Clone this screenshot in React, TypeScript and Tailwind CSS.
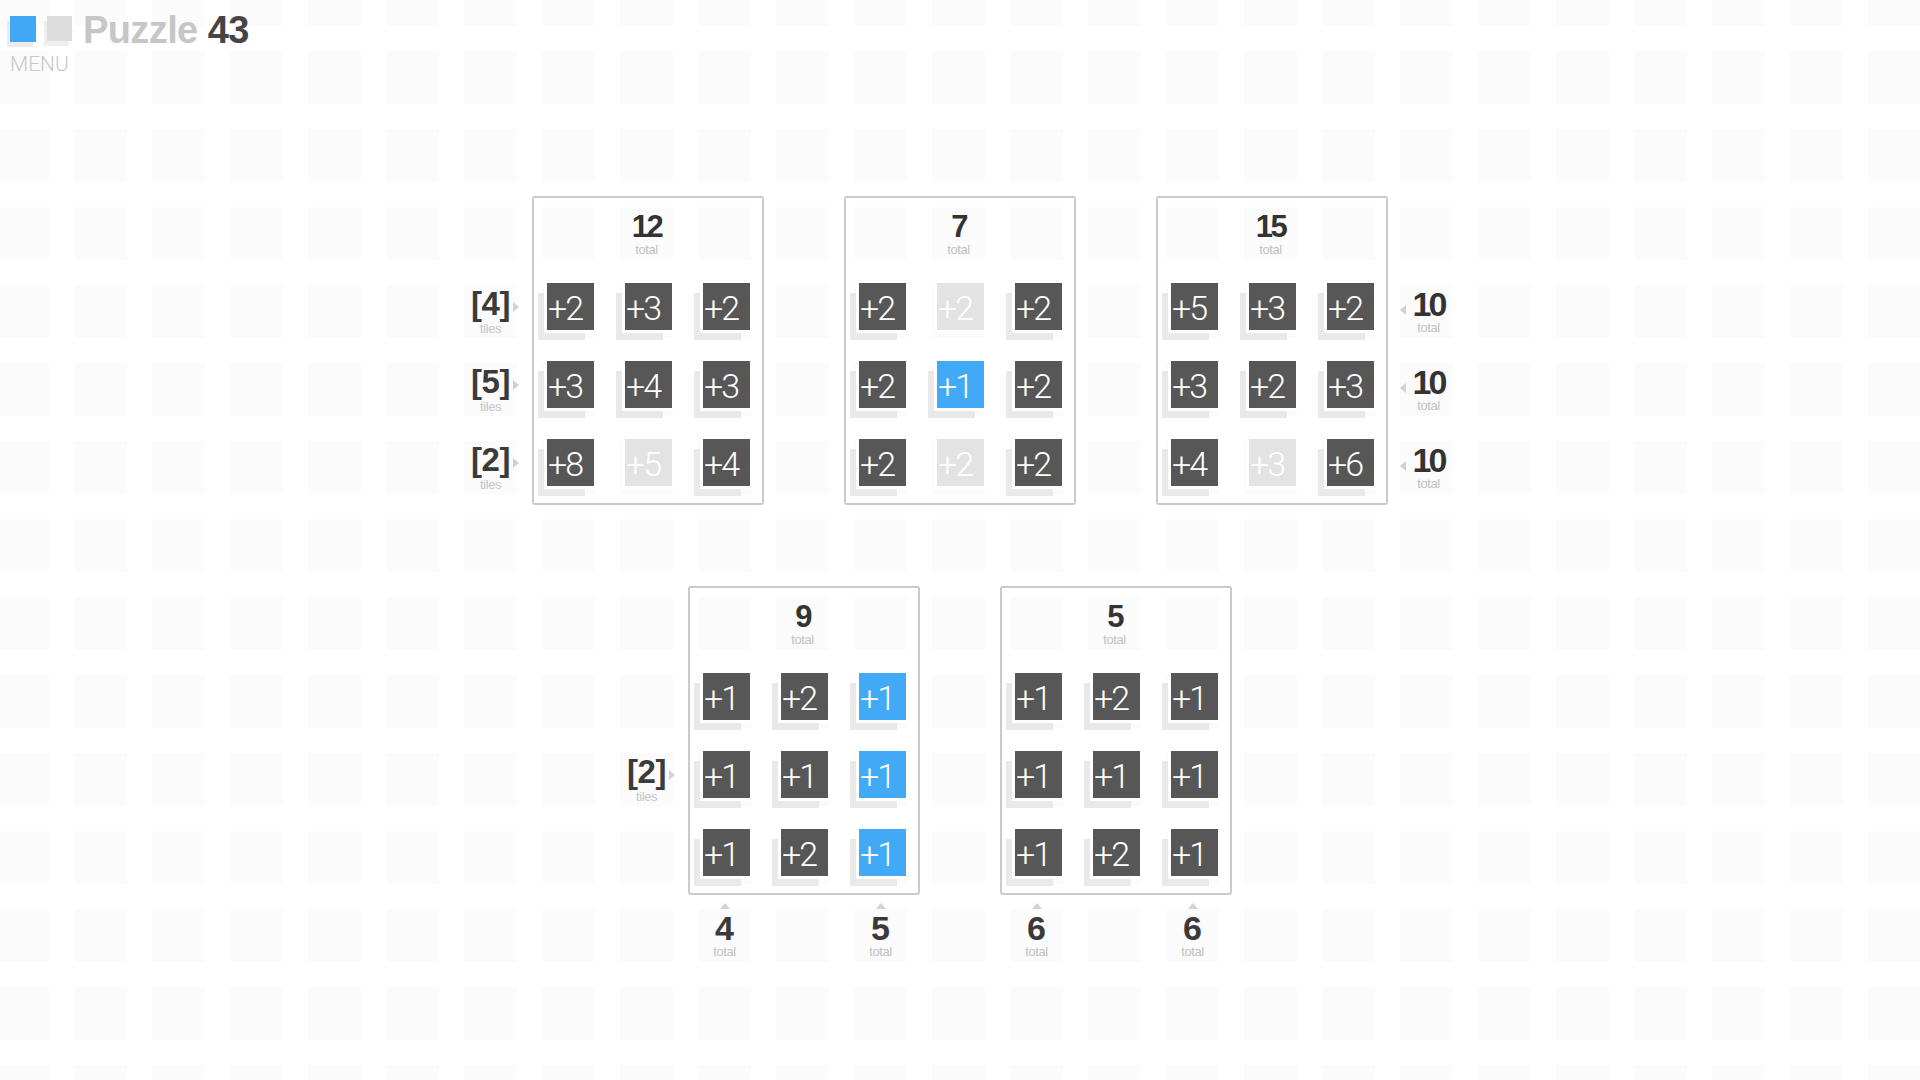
import clsx from 'clsx';

type Kind = 'on' | 'off' | 'blue';
type Cell = [number, Kind];

interface Board {
  total: number;
  col: string;
  row: string;
  cells: Cell[][];
}

// top row of boards, then the two lower ones
const boards: Board[] = [
  {
    total: 12,
    col: 'col-start-8',
    row: 'row-start-4',
    cells: [
      [[2, 'on'], [3, 'on'], [2, 'on']],
      [[3, 'on'], [4, 'on'], [3, 'on']],
      [[8, 'on'], [5, 'off'], [4, 'on']],
    ],
  },
  {
    total: 7,
    col: 'col-start-12',
    row: 'row-start-4',
    cells: [
      [[2, 'on'], [2, 'off'], [2, 'on']],
      [[2, 'on'], [1, 'blue'], [2, 'on']],
      [[2, 'on'], [2, 'off'], [2, 'on']],
    ],
  },
  {
    total: 15,
    col: 'col-start-16',
    row: 'row-start-4',
    cells: [
      [[5, 'on'], [3, 'on'], [2, 'on']],
      [[3, 'on'], [2, 'on'], [3, 'on']],
      [[4, 'on'], [3, 'off'], [6, 'on']],
    ],
  },
  {
    total: 9,
    col: 'col-start-10',
    row: 'row-start-9',
    cells: [
      [[1, 'on'], [2, 'on'], [1, 'blue']],
      [[1, 'on'], [1, 'on'], [1, 'blue']],
      [[1, 'on'], [2, 'on'], [1, 'blue']],
    ],
  },
  {
    total: 5,
    col: 'col-start-14',
    row: 'row-start-9',
    cells: [
      [[1, 'on'], [2, 'on'], [1, 'on']],
      [[1, 'on'], [1, 'on'], [1, 'on']],
      [[1, 'on'], [2, 'on'], [1, 'on']],
    ],
  },
];

const tileLabels = [
  { n: 4, col: 'col-start-7', row: 'row-start-5' },
  { n: 5, col: 'col-start-7', row: 'row-start-6' },
  { n: 2, col: 'col-start-7', row: 'row-start-7' },
  { n: 2, col: 'col-start-9', row: 'row-start-11' },
];

const rowTotals = [
  { n: 10, row: 'row-start-5' },
  { n: 10, row: 'row-start-6' },
  { n: 10, row: 'row-start-7' },
];

const colTotals = [
  { n: 4, col: 'col-start-10' },
  { n: 5, col: 'col-start-12' },
  { n: 6, col: 'col-start-14' },
  { n: 6, col: 'col-start-16' },
];

function Tile({ value, kind }: { value: number; kind: Kind }) {
  return (
    <div
      className={clsx(
        "flex size-[53px] translate-x-[2px] -translate-y-[5px] items-center border-[3px] border-white pl-[1px] pt-[2px] font-['Roboto',sans-serif] text-[34px] font-light leading-none tracking-[-2px] text-white",
        kind === 'on' && 'bg-[#575757] shadow-[-9px_10px_0_-3px_#e9e9e9]',
        kind === 'blue' && 'bg-[#42a9f6] shadow-[-9px_10px_0_-3px_#e9e9e9]',
        kind === 'off' && 'bg-[#e3e3e3]'
      )}
    >
      +{value}
    </div>
  );
}

function Arrow({ dir, className }: { dir: 'right' | 'left' | 'up'; className: string }) {
  const pts = {
    right: '0,0 6,5 0,10',
    left: '6,0 0,5 6,10',
    up: '0,6 5,0 10,6',
  }[dir];
  const w = dir === 'up' ? 10 : 6;
  const h = dir === 'up' ? 6 : 10;
  return (
    <svg width={w} height={h} viewBox={`0 0 ${w} ${h}`} className={clsx('absolute', className)}>
      <polygon points={pts} fill="#d2d2d2" />
    </svg>
  );
}

function BoardBox({ board }: { board: Board }) {
  return (
    <div
      className={clsx(
        board.col,
        board.row,
        'col-span-3 row-span-4 -mb-[11px] -ml-[10px] -mr-[13px] -mt-[11px] rounded-[3px] border-2 border-[#cacaca] pl-[8px] pt-[9px]'
      )}
    >
      <div className="grid grid-cols-[repeat(3,53px)] grid-rows-[repeat(4,53px)] gap-[25px]">
        <div className="col-start-2 flex flex-col items-center pt-[4px]">
          <span className="text-[31px] font-bold leading-[32px] tracking-[-2.5px] text-[#333]">{board.total}</span>
          <span className="text-[13px] leading-none tracking-[-0.4px] text-[#c2c2c2]">total</span>
        </div>
        <div />
        {board.cells.flat().map(([v, k], i) => (
          <div key={i} className="size-[53px]">
            <Tile value={v} kind={k} />
          </div>
        ))}
      </div>
    </div>
  );
}

export default function App() {
  return (
    <div className="relative h-[1080px] w-full overflow-hidden bg-white font-['Liberation_Sans',Arial,sans-serif]">
      {/* faint backdrop squares */}
      <div className="absolute -left-[4px] -top-[27px] grid grid-cols-[repeat(25,53px)] gap-[25px]">
        {Array.from({ length: 25 * 15 }).map((_, i) => (
          <div key={i} className="size-[53px] bg-[#fbfbfb]" />
        ))}
      </div>

      {/* logo + menu */}
      <div className="absolute left-[10px] top-[11px]">
        <div className="flex items-start">
          <div className="mt-[5px] size-[26px] bg-[#40a8f5] shadow-[-3px_5px_0_#ececec]" />
          <div className="ml-[11px] mt-[5px] size-[25px] bg-[#dcdcdc] shadow-[-3px_5px_0_#efefef]" />
          <div className="ml-[11px] text-[38px] font-bold leading-none tracking-[-0.6px]">
            <span className="text-[#c6c6c6]">Puzzle</span> <span className="text-[#454545]">43</span>
          </div>
        </div>
        <div className="mt-[5px] font-['Roboto',sans-serif] text-[21px] font-light leading-none text-[#c8c8c8]">
          MENU
        </div>
      </div>

      <div className="relative -ml-[4px] -mt-[27px] grid grid-cols-[repeat(25,53px)] grid-rows-[repeat(14,53px)] gap-[25px]">
        {boards.map((b, i) => (
          <BoardBox key={i} board={b} />
        ))}

        {tileLabels.map((l, i) => (
          <div key={i} className={clsx(l.col, l.row, 'relative flex flex-col items-center pt-[1px]')}>
            <span className="text-[33px] font-bold leading-[36px] tracking-[-0.5px] text-[#3b3b3b]">[{l.n}]</span>
            <span className="text-[13px] leading-none tracking-[-0.4px] text-[#c6c6c6]">tiles</span>
            <Arrow dir="right" className="-right-[2px] top-[17px]" />
          </div>
        ))}

        {rowTotals.map((l, i) => (
          <div key={i} className={clsx('col-start-19', l.row, 'relative flex flex-col items-center pl-[4px] pt-[3px]')}>
            <span className="text-[34px] font-bold leading-[33px] tracking-[-3px] text-[#333]">{l.n}</span>
            <span className="text-[13px] leading-none tracking-[-0.4px] text-[#c2c2c2]">total</span>
            <Arrow dir="left" className="left-0 top-[20px]" />
          </div>
        ))}

        {colTotals.map((l, i) => (
          <div key={i} className={clsx(l.col, 'row-start-13 relative flex flex-col items-center pt-[3px]')}>
            <Arrow dir="up" className="-top-[6px] left-[22px]" />
            <span className="text-[34px] font-bold leading-[33px] text-[#3a3a3a]">{l.n}</span>
            <span className="text-[13px] leading-none tracking-[-0.4px] text-[#c2c2c2]">total</span>
          </div>
        ))}
      </div>
    </div>
  );
}
